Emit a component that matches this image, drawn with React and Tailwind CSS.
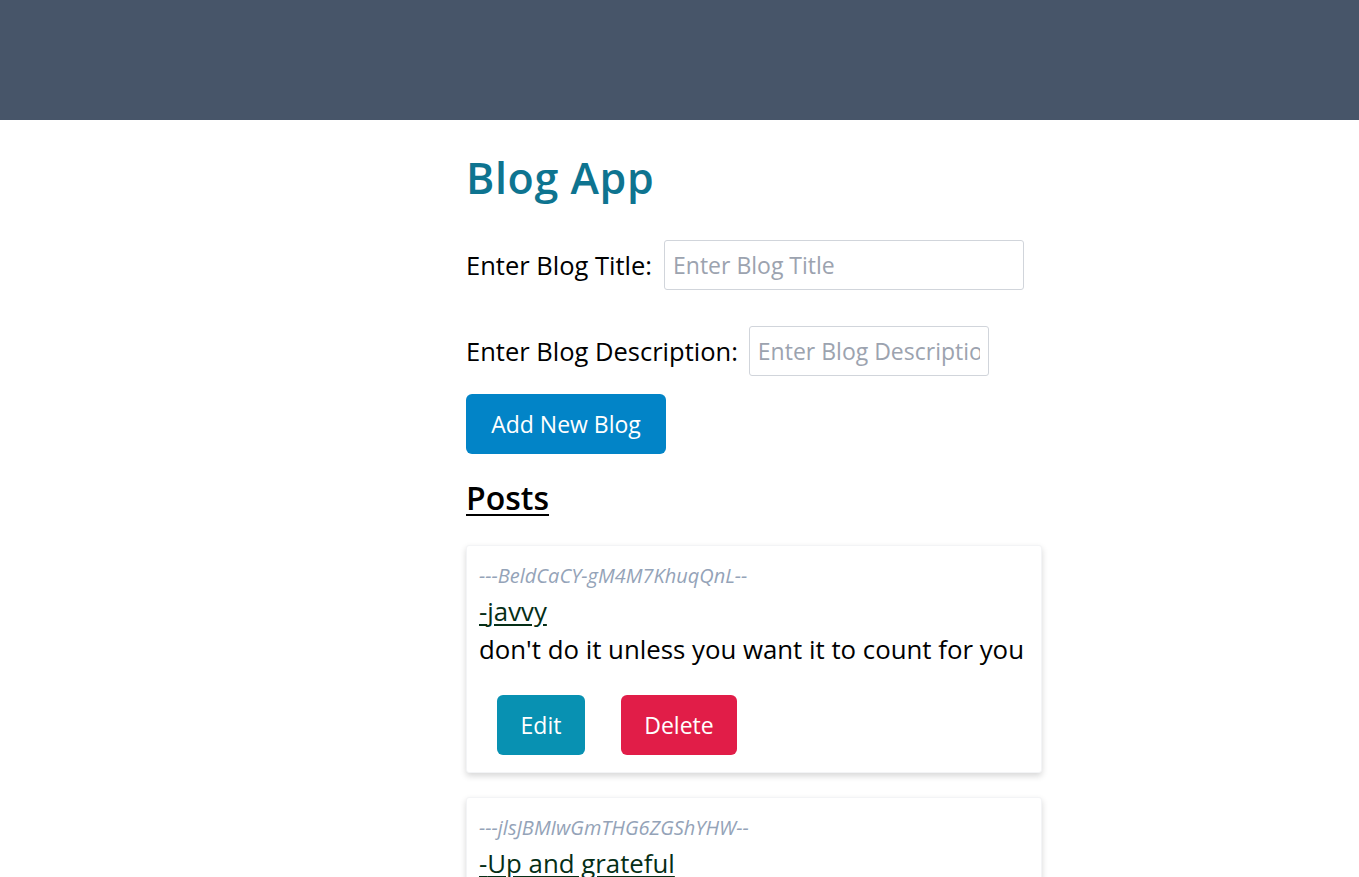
import React, { useState } from 'react';

const initialPosts = [
  { id: 'BeldCaCY-gM4M7KhuqQnL', title: 'javvy', description: "don't do it unless you want it to count for you" },
  { id: 'jlsJBMIwGmTHG6ZGShYHW', title: 'Up and grateful', description: 'keep showing up, every single day' },
];

const App = () => {
  const [posts, setPosts] = useState(initialPosts);
  const [title, setTitle] = useState('');
  const [description, setDescription] = useState('');

  const addBlog = () => {
    if (!title.trim()) return;
    setPosts([...posts, { id: Math.random().toString(36).slice(2, 22), title, description }]);
    setTitle('');
    setDescription('');
  };

  const deleteBlog = (id) => setPosts(posts.filter((p) => p.id !== id));

  return (
    <div className="min-h-screen bg-white text-black font-['Open_Sans',sans-serif]">
      <header className="h-[120px] bg-[#475569]" />

      <main className="pl-[466px] pb-10">
        <h1 className="mt-[33px] text-[43px] leading-[50px] font-semibold tracking-[0.6px] text-[#0e7490]">Blog App</h1>

        {/* Form */}
        <div className="mt-[37px] flex items-center gap-3 h-[50px]">
          <label className="text-[25.5px] leading-[36px]">Enter Blog Title:</label>
          <input
            className="w-[360px] h-[50px] px-2 text-[23px] border border-[#d1d5db] rounded-[3px] placeholder:text-[#9ca3af] focus:outline-none"
            placeholder="Enter Blog Title"
            value={title}
            onChange={(e) => setTitle(e.target.value)}
          />
        </div>
        <div className="mt-[36px] flex items-center gap-[11px] h-[50px]">
          <label className="text-[25.5px] leading-[36px]">Enter Blog Description:</label>
          <input
            className="w-[240px] h-[50px] px-2 text-[23px] border border-[#d1d5db] rounded-[3px] placeholder:text-[#9ca3af] focus:outline-none"
            placeholder="Enter Blog Description"
            value={description}
            onChange={(e) => setDescription(e.target.value)}
          />
        </div>
        <button
          onClick={addBlog}
          className="mt-[18px] w-[200px] h-[60px] rounded-md bg-[#0284c7] text-white text-[23px]"
        >
          Add New Blog
        </button>

        <h2 className="mt-[24px] text-[32px] leading-[40px] font-semibold underline underline-offset-[4px] decoration-2">Posts</h2>

        {/* Posts List */}
        <div className="mt-[27px] flex flex-col gap-[24px]">
          {posts.map((post) => (
            <div
              key={post.id}
              className="w-[576px] bg-white border border-gray-100 rounded-[3px] shadow-[0_3px_6px_rgba(0,0,0,0.16)] pl-[12px] pr-[12px] pt-[14px] pb-[17px]"
            >
              <p className="text-[20px] leading-[32px] italic text-[#94a3b8]">---{post.id}--</p>
              <p className="text-[25.8px] leading-[38px] text-[#052e16] underline underline-offset-[3px]">-{post.title}</p>
              <p className="text-[25.8px] leading-[38px] whitespace-nowrap">{post.description}</p>
              <div className="mt-[27px] ml-[18px] flex gap-9">
                <button className="w-[88px] h-[60px] rounded-md bg-[#0891b2] text-white text-[23px]">Edit</button>
                <button
                  onClick={() => deleteBlog(post.id)}
                  className="w-[116px] h-[60px] rounded-md bg-[#e11d48] text-white text-[23px]"
                >
                  Delete
                </button>
              </div>
            </div>
          ))}
        </div>
      </main>
    </div>
  );
};

export default App;
